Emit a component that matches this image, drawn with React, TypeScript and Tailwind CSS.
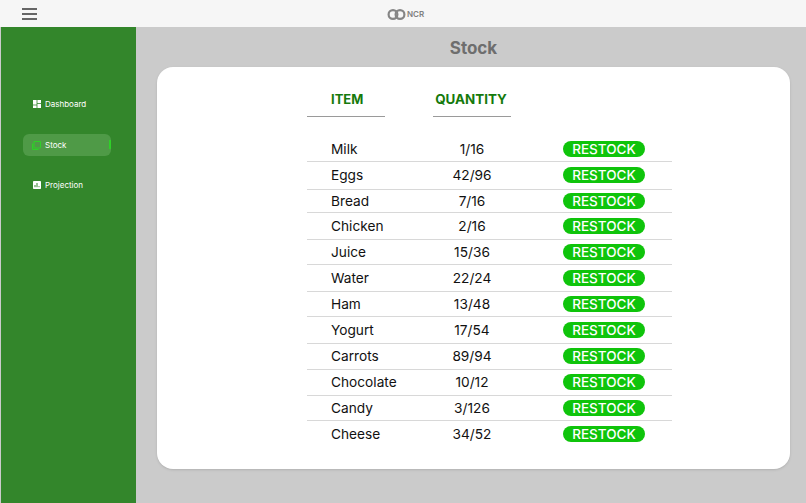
import React from "react";

const rows = [
  { name: "Milk", qty: "1/16", cls: "h-[26px] pt-[1px]" },
  { name: "Eggs", qty: "42/96", cls: "h-[28px] pb-[1px]" },
  { name: "Bread", qty: "7/16", cls: "h-[23px]" },
  { name: "Chicken", qty: "2/16", cls: "h-[27px]" },
  { name: "Juice", qty: "15/36", cls: "h-[25px]" },
  { name: "Water", qty: "22/24", cls: "h-[27px]" },
  { name: "Ham", qty: "13/48", cls: "h-[25px]" },
  { name: "Yogurt", qty: "17/54", cls: "h-[27px]" },
  { name: "Carrots", qty: "89/94", cls: "h-[26px] pb-[1px]" },
  { name: "Chocolate", qty: "10/12", cls: "h-[26px] pb-[1px]" },
  { name: "Candy", qty: "3/126", cls: "h-[25px]" },
  { name: "Cheese", qty: "34/52", cls: "h-[26px]" },
];

const DashboardIcon = () => (
  <svg width="8" height="8" viewBox="0 0 8 8" fill="white">
    <rect x="0" y="0" width="3.6" height="4.6" />
    <rect x="4.4" y="0" width="3.6" height="3" />
    <rect x="0" y="5.4" width="3.6" height="2.6" />
    <rect x="4.4" y="3.8" width="3.6" height="4.2" />
  </svg>
);

const StockIcon = () => (
  <svg width="9" height="9" viewBox="0 0 9 9" fill="none" stroke="#2fd028" strokeWidth="1.1">
    <rect x="2" y="0.5" width="6.5" height="6.5" rx="0.6" />
    <path d="M0.5 2.5v5a1 1 0 0 0 1 1h5" />
  </svg>
);

const ProjectionIcon = () => (
  <svg width="8" height="8" viewBox="0 0 8 8">
    <rect width="8" height="8" rx="0.8" fill="white" />
    <path d="M2 6.2V4M4 6.2V2M6 6.2V5.2" stroke="#33862b" strokeWidth="1" />
  </svg>
);

const NcrLogo = () => (
  <svg width="19" height="11" viewBox="0 0 19 11" fill="none" stroke="#858585" strokeWidth="2.2">
    <circle cx="6" cy="5.5" r="4.4" />
    <circle cx="13" cy="5.5" r="4.4" />
  </svg>
);

export default function App() {
  return (
    <div className="w-[806px] h-[503px] overflow-hidden flex flex-col bg-[#cbcbcb] font-['Inter',sans-serif]">
      <header className="h-[27px] shrink-0 bg-[#f6f6f6] relative flex items-center justify-center">
        <div className="absolute left-[22px] top-[8px] w-[15px] flex flex-col gap-[3px]">
          <div className="h-[2px] bg-[#666666]" />
          <div className="h-[2px] bg-[#666666]" />
          <div className="h-[2px] bg-[#666666]" />
        </div>
        <div className="flex items-center gap-[1px] ml-[5px] mt-[1px]">
          <NcrLogo />
          <span className="text-[8px] font-semibold text-[#808080]">NCR</span>
        </div>
      </header>
      <div className="flex flex-1 min-h-0">
        <aside className="w-[135px] shrink-0 ml-[1px] bg-[#33862b] pt-[66px] pl-[22px] flex flex-col text-[8px] text-white">
          <div className="flex items-center gap-[4px] h-[22px] pl-[10px]">
            <DashboardIcon />
            <span>Dashboard</span>
          </div>
          <div className="relative mt-[19px] flex items-center gap-[3px] h-[22px] w-[88px] pl-[9px] rounded-md bg-[#4f9a47]">
            <StockIcon />
            <span className="ml-[1px]">Stock</span>
            <div className="absolute right-0 top-[6px] w-[2px] h-[9px] bg-[#2fd028]" />
          </div>
          <div className="mt-[18px] flex items-center gap-[4px] h-[22px] pl-[10px]">
            <ProjectionIcon />
            <span>Projection</span>
          </div>
        </aside>
        <main className="flex-1 flex flex-col pl-[21px] pr-[16px]">
          <h1 className="h-[40px] pt-[3px] flex items-center justify-center text-[17px] font-bold text-[#6e6e6e]">Stock</h1>
          <div className="h-[402px] bg-white rounded-2xl shadow-sm pl-[150px] pt-[23px]">
            <div className="flex gap-[48px] w-[365px] h-[27px]">
              <div className="w-[78px] h-[27px] border-b border-[#9a9a9a] pl-[24px] text-[13px] leading-[18px] font-bold text-[#157a0c]">ITEM</div>
              <div className="w-[78px] h-[27px] border-b border-[#9a9a9a] pr-[2px] flex justify-center text-[13.4px] leading-[18px] font-bold text-[#157a0c] whitespace-nowrap">QUANTITY</div>
            </div>
            <div className="mt-[19px] w-[365px]">
              {rows.map((row, i) => (
                <div
                  key={row.name}
                  className={`${row.cls} flex items-center text-[13.7px] text-[#111111] ${i < rows.length - 1 ? "border-b border-[#d8d8d8]" : ""}`}
                >
                  <div className="w-[126px] pl-[24px]">{row.name}</div>
                  <div className="w-[78px] text-center">{row.qty}</div>
                  <div className="ml-[52px] w-[82px] h-[16px] rounded-full bg-[#0fc40b] text-white text-[13.5px] font-medium leading-[16px] text-center">RESTOCK</div>
                </div>
              ))}
            </div>
          </div>
        </main>
      </div>
    </div>
  );
}
